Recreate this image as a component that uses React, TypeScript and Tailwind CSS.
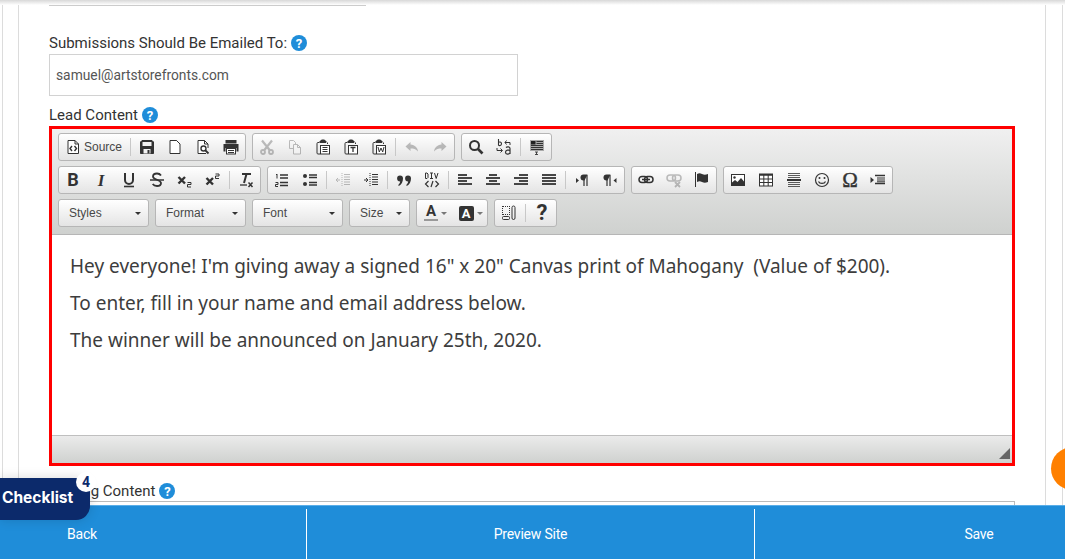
import type { ReactNode } from "react";

const S = ({ children, dim }: { children: ReactNode; dim?: boolean }) => (
  <svg
    width="16"
    height="16"
    viewBox="0 0 16 16"
    fill="none"
    stroke="#333"
    strokeWidth="1"
    className={dim ? "opacity-30" : ""}
  >
    {children}
  </svg>
);

const lines = (items: [number, number, number][], w = 1.5) =>
  items.map(([x1, x2, y], i) => <path key={i} d={`M${x1} ${y}H${x2}`} strokeWidth={w} />);

const clip = (inner: ReactNode) => (
  <S>
    <path d="M4.5 3.5H3a1 1 0 0 0-1 1V14a1 1 0 0 0 1 1h2" />
    <path d="M5 3.5V2h1.5V1h3v1H11v1.5Z" fill="#333" />
    <path d="M12.5 3.5V5" />
    <rect x="5.5" y="6.5" width="9" height="8.5" fill="#fff" />
    {inner}
  </S>
);

const icons: Record<string, ReactNode> = {
  source: (
    <S>
      <path d="M3 1.5h7l3.5 3.5v9.500H3Z" fill="#fff" />
      <path d="M10 1.5V5h3.5" />
      <path d="M7 7 5 9.5 7 12M9.5 7l2 2.5-2 2.5" strokeWidth="1.4" />
    </S>
  ),
  save: (
    <S>
      <path d="M3 1.500h10l1.500 1.500v11.500H1.500V3Z" fill="#333" />
      <rect x="3.500" y="3" width="9" height="4" fill="#f2f2f2" stroke="none" />
      <rect x="4.500" y="10" width="7" height="4.500" fill="#f2f2f2" stroke="none" />
      <rect x="8.500" y="11" width="2" height="3.500" fill="#333" stroke="none" />
    </S>
  ),
  newpage: (
    <S>
      <path d="M3 1.5h6.500l3.500 3.500v9.500H3Z" fill="#fff" />
      <path d="M9.500 1.500 13 5" />
    </S>
  ),
  preview: (
    <S>
      <path d="M11 14.500H3v-13h6.500L13 5v4" fill="#fff" />
      <path d="M9.500 1.500V5H13" />
      <circle cx="8.500" cy="9.500" r="2.500" strokeWidth="1.400" />
      <path d="m10.500 11.500 3 3" strokeWidth="1.800" />
    </S>
  ),
  print: (
    <S>
      <rect x="3" y="1.500" width="10" height="2.500" fill="#333" />
      <path d="M.5 5h15v7.500h-2V9h-11v3.500h-2Z" fill="#333" stroke="none" />
      <rect x="3.500" y="9.500" width="9" height="5.500" fill="#fff" />
      {lines([[5, 11, 11.500], [5, 11, 13.500]], 1)}
    </S>
  ),
  cut: (
    <S dim>
      <circle cx="4" cy="13" r="2" strokeWidth="1.800" />
      <circle cx="12" cy="13" r="2" strokeWidth="1.800" />
      <path d="M3 1.500 11 11.500M13 1.500 5 11.500" strokeWidth="2.200" />
    </S>
  ),
  copy: (
    <S dim>
      <path d="M6 9.500H2.500v-8h4l2 2v1.500" />
      <path d="M6.500 5.500h4l3 3v6.500h-7Z" fill="#fff" />
      <path d="M10.500 5.500v3h3" />
    </S>
  ),
  paste: clip(lines([[7.500, 12.500, 8.500], [7.500, 12.500, 10.500], [7.500, 12.500, 12.500]], 1)),
  pasteText: clip(<path d="M7.500 8.500h5M10 8.500v4.500" strokeWidth="1.300" />),
  pasteWord: clip(<path d="m7 8 1.300 5L10 9l1.700 4L13 8" strokeWidth="1" />),
  undo: (
    <S dim>
      <path d="M6.500 3 1.500 7.500l5 4.500V9.500c3 0 5.500.5 7.500 3-.5-4-3-6.500-7.500-7Z" fill="#333" stroke="none" />
    </S>
  ),
  redo: (
    <S dim>
      <path d="m9.500 3 5 4.500-5 4.500V9.500c-3 0-5.500.5-7.500 3 .5-4 3-6.500 7.500-7Z" fill="#333" stroke="none" />
    </S>
  ),
  find: (
    <S>
      <circle cx="6.500" cy="6.500" r="4.500" strokeWidth="2" />
      <path d="m10 10 4.500 4.500" strokeWidth="2.600" />
    </S>
  ),
  replace: (
    <S>
      <path d="M2.500 0v6.500M2.500 3.500c.6-.8 3-.8 3 1.300s-2.400 2.100-3 1.200" strokeWidth="1.100" />
      <path d="M9 3.500h5v2.500M10.500 1.500 9 3.500l1.500 2" strokeWidth="1" />
      <path d="M1 9v2.500h5M4.500 9.500l2 2-2 2" strokeWidth="1" />
      <path d="M10 8.500c1-1 4-1 4 1v5.500M14 11.500c-1-.7-4.500-.7-4.500 1.700s3.500 2.300 4.500 .8" strokeWidth="1.200" />
    </S>
  ),
  selectAll: (
    <S>
      <rect x="1" y="1" width="14" height="11" fill="#aaa" stroke="none" />
      <rect x="2" y="2" width="4.500" height="3.500" fill="#222" stroke="none" />
      {lines([[7.500, 14, 2.500], [7.500, 14, 4.500], [2, 14, 6.500], [2, 14, 8.500], [2, 14, 10.500]], 1)}
      <path d="M6 13h3M7.500 13v2.500M6 15.500h3" strokeWidth=".9" />
    </S>
  ),
  bold: <Letter className="font-bold text-[18px]">B</Letter>,
  italic: <Letter className="font-bold italic text-[17px] [font-family:'Liberation_Serif',serif]">I</Letter>,
  underline: (
    <S>
      <path d="M4 1v7a4 4 0 0 0 8 0V1" strokeWidth="2" />
      <path d="M3 14.500h10" strokeWidth="1.600" />
    </S>
  ),
  strike: (
    <S>
      <path d="M12 3.500C11 2 9.500 1.500 8 1.500c-2.500 0-4 1-4 3 0 3.500 8 3 8 6.500 0 2-1.500 3-4 3-1.800 0-3.300-.6-4.300-2" strokeWidth="1.800" />
      <path d="M1 8h14" strokeWidth="1.500" />
    </S>
  ),
  sub: (
    <S>
      <path d="m1.500 5 6.500 6.500M8 5l-6.500 6.500" strokeWidth="2.400" />
      <path d="M10.500 10.500H14V12.500H10.500V15H14" strokeWidth="1" />
    </S>
  ),
  sup: (
    <S>
      <path d="m1.500 6 6.500 6.500M8 6l-6.500 6.500" strokeWidth="2.400" />
      <path d="M10.500 2H14V4H10.500V6.500H14" strokeWidth="1" />
    </S>
  ),
  clear: (
    <S>
      <path d="M4 2h9M8.500 2 6 11" strokeWidth="2" />
      <path d="M2 13h7" strokeWidth="1.300" />
      <path d="m10.500 10.500 4 4.500m0-4.500-4 4.500" strokeWidth="1.500" />
    </S>
  ),
  ol: (
    <S>
      <path d="M3 2v4.500M2 3l1-1" strokeWidth="1" />
      <path d="M1.500 10.500h2.500v2H1.500V14.500H4" strokeWidth="1" />
      {lines([[6, 14, 3], [6, 14, 6], [6, 14, 10.500], [6, 14, 13.500]])}
    </S>
  ),
  ul: (
    <S>
      <circle cx="3" cy="4" r="2" fill="#333" stroke="none" />
      <circle cx="3" cy="12" r="2" fill="#333" stroke="none" />
      {lines([[7, 15, 3], [7, 15, 5.500], [7, 15, 10.500], [7, 15, 13]])}
    </S>
  ),
  outdent: (
    <S dim>
      <path d="M1 8h4M3 6 1 8l2 2" />
      <path d="M7 1v14" strokeDasharray="1 1" />
      {lines([[9, 15, 2.500], [9, 15, 5], [9, 15, 7.500], [9, 15, 10], [9, 15, 12.500]], 1)}
    </S>
  ),
  indent: (
    <S>
      <path d="M1 8h4M3 6l2 2-2 2" />
      <path d="M7 1v14" strokeDasharray="1 1" />
      {lines([[9, 15, 2.500], [9, 15, 5], [9, 15, 7.500], [9, 15, 10], [9, 15, 12.500]], 1)}
    </S>
  ),
  quote: (
    <S>
      <path d="M4 3.500a3 3 0 0 1 3 3c0 3.200-1.500 6-4.200 7.500l-.6-1C3.400 12 4 10.800 4.200 9.500A3 3 0 0 1 4 3.500Z" fill="#333" stroke="none" />
      <path d="M12 3.500a3 3 0 0 1 3 3c0 3.200-1.500 6-4.200 7.500l-.6-1c1.200-1 1.800-2.200 2-3.500A3 3 0 0 1 12 3.500Z" fill="#333" stroke="none" />
    </S>
  ),
  div: (
    <S>
      <path d="M1.500 1v5.500h1.500l1-1V2L3 1ZM6 1h3M7.500 1v5.500M6 6.500h3M10.500 1l1.700 5.500L14 1" strokeWidth="1" />
      <path d="M4.500 9 1.500 12l3 3M11.500 9l3 3-3 3M9 9l-2 6" strokeWidth="1.200" />
    </S>
  ),
  left: <S>{lines([[1, 10, 3], [1, 15, 6], [1, 10, 9], [1, 15, 12]], 1.800)}</S>,
  center: <S>{lines([[4, 12, 3], [1, 15, 6], [4, 12, 9], [1, 15, 12]], 1.800)}</S>,
  right: <S>{lines([[6, 15, 3], [1, 15, 6], [6, 15, 9], [1, 15, 12]], 1.800)}</S>,
  justify: <S>{lines([[1, 15, 3], [1, 15, 6], [1, 15, 9], [1, 15, 12]], 1.800)}</S>,
  ltr: (
    <S>
      <path d="m2 6 3 2.500L2 11Z" fill="#333" stroke="none" />
      <path d="M10 3v11M13 3v11" strokeWidth="1.200" />
      <path d="M13.500 2.500H9.500a3 3 0 0 0 0 6h1Z" fill="#333" stroke="none" />
    </S>
  ),
  rtl: (
    <S>
      <path d="m14.500 6-3 2.500 3 2.500Z" fill="#333" stroke="none" />
      <path d="M5 3v11M8 3v11" strokeWidth="1.200" />
      <path d="M8.500 2.500H4.500a3 3 0 0 0 0 6h1Z" fill="#333" stroke="none" />
    </S>
  ),
  link: (
    <S>
      <rect x="1" y="4.500" width="8.500" height="6" rx="3" strokeWidth="1.500" />
      <rect x="6.500" y="4.500" width="8.500" height="6" rx="3" strokeWidth="1.500" />
      <path d="M4 7.500h8" strokeWidth="1.500" />
    </S>
  ),
  unlink: (
    <S dim>
      <rect x="1" y="3" width="8.500" height="6" rx="3" strokeWidth="1.500" />
      <rect x="6.500" y="3" width="8.500" height="6" rx="3" strokeWidth="1.500" />
      <path d="m9 10 5 5m0-5-5 5" strokeWidth="1.800" />
    </S>
  ),
  flag: (
    <S>
      <path d="M1.500 0v15" strokeWidth="1" />
      <path d="M3 2c2-1 3-1 5 0s3.500 1 6 0v8c-2.500 1-4 1-6 0s-3-1-5 0Z" fill="#333" stroke="none" />
    </S>
  ),
  image: (
    <S>
      <rect x="1.500" y="2.500" width="13" height="11" fill="#fff" />
      <circle cx="4.500" cy="5.500" r="1.200" fill="#333" stroke="none" />
      <path d="M2 13v-2.500L5 8l2.500 2L11 6l3 3.500V13Z" fill="#333" stroke="none" />
    </S>
  ),
  table: (
    <S>
      <rect x="1.500" y="3" width="13" height="11" fill="#fff" />
      <path d="M1 2.500h14" strokeWidth="2" />
      <path d="M1.500 7h13M1.500 10.500h13M5.800 3v11M10.200 3v11" />
    </S>
  ),
  hr: (
    <S>
      {lines([[2, 14, 1.500], [2, 14, 3.500], [2, 14, 5.500], [2, 14, 10.500], [2, 14, 12.500], [2, 14, 14.500]], 0.8)}
      <path d="M1 8h14" strokeWidth="2" />
    </S>
  ),
  smiley: (
    <S>
      <circle cx="8" cy="8" r="6.500" strokeWidth="1.200" />
      <circle cx="5.500" cy="6" r="1" fill="#333" stroke="none" />
      <circle cx="10.500" cy="6" r="1" fill="#333" stroke="none" />
      <path d="M4.500 9.500c1 2.500 6 2.500 7 0" strokeWidth="1.200" />
    </S>
  ),
  omega: <Letter className="text-[21px] [font-family:'Liberation_Serif',serif] [-webkit-text-stroke:0.4px_#333]">Ω</Letter>,
  iframe: (
    <S>
      <path d="m.5 5 3.500 3-3.500 3Z" fill="#333" stroke="none" />
      <path d="M5 3.500h10M5 11.500h10" strokeWidth="1.500" />
      <path d="M7 6h8M7 8h8M7 9.800h8" strokeWidth="1" />
    </S>
  ),
  maximize: (
    <S>
      <path d="M1.500 1v10M2 1.500h6M2 9.500h6M8.500 1v9" strokeDasharray="1 1" />
      <rect x="1.500" y="11.500" width="7" height="3" rx="1" />
      <rect x="11" y="1" width="3" height="13.500" rx="1.500" />
    </S>
  ),
  help: <Letter className="font-bold text-[22px]">?</Letter>,
};

function Letter({ children, className }: { children: ReactNode; className?: string }) {
  return (
    <span className={`flex h-4 w-4 items-center justify-center leading-none text-[#333] ${className ?? ""}`}>
      {children}
    </span>
  );
}

const Btn = ({ name }: { name: string }) => (
  <span className="flex h-full w-7 items-center justify-center">{icons[name]}</span>
);

const Sep = () => (
  <span className="flex h-full w-[5px] items-center justify-center">
    <span className="h-[18px] w-px bg-[#c8c8c8]" />
  </span>
);

const Group = ({ children }: { children: ReactNode }) => (
  <div className="flex h-[28px] items-center rounded-[3px] border border-[#b6b6b6] bg-gradient-to-b from-[#ffffff] to-[#e4e4e4]">
    {children}
  </div>
);

const Combo = ({ label, width }: { label: string; width: string }) => (
  <div
    className={`flex h-[28px] items-center justify-between rounded-[3px] border border-[#b6b6b6] bg-gradient-to-b from-[#ffffff] to-[#e4e4e4] pl-[10px] pr-[7px] font-['Liberation_Sans',sans-serif] text-[12px] text-[#484848] ${width}`}
  >
    <span>{label}</span>
    <span className="h-0 w-0 border-x-[3px] border-t-[3px] border-x-transparent border-t-[#333]" />
  </div>
);

const Icons = ({ names }: { names: string[] }) => (
  <>
    {names.map((n, i) => (n === "|" ? <Sep key={i} /> : <Btn key={i} name={n} />))}
  </>
);

const Help = () => (
  <span className="ml-[4px] inline-flex h-4 w-4 items-center justify-center rounded-full bg-[#1f8dd9] text-[13px] font-bold leading-none text-white">
    ?
  </span>
);

const Label = ({ children }: { children: ReactNode }) => (
  <div className="flex items-center text-[15px] leading-[20px] text-[#333]">
    {children}
    <Help />
  </div>
);

const TextColor = ({ box }: { box?: boolean }) => (
  <span className="flex h-full w-[35px] items-center justify-center gap-[3px] pl-[2px]">
    {box ? (
      <span className="flex h-[15px] w-[15px] items-center justify-center rounded-[2px] bg-[#333] text-[13px] font-bold leading-none text-white">
        A
      </span>
    ) : (
      <span className="flex flex-col items-center text-[15px] font-bold leading-[13px] text-[#333]">
        A<span className="mt-[1px] h-[2px] w-[14px] bg-[#999]" />
      </span>
    )}
    <span className="h-0 w-0 border-x-[3px] border-t-[3px] border-x-transparent border-t-[#777]" />
  </span>
);

export default function App() {
  return (
    <div className="relative flex h-screen flex-col overflow-hidden bg-white font-['Roboto',sans-serif]">
      <div className="absolute inset-x-0 top-0 z-10 h-[5px] bg-gradient-to-b from-[#d8d8d8] to-white" />
      <main className="mx-[2px] min-h-0 flex-1 overflow-hidden border-x border-[#dcdcdc] pl-[15px] pr-[16px]">
        <div className="h-full overflow-hidden border-x border-[#dcdcdc] pl-[30px] pr-[30px]">
          <div className="h-[6px] w-[317px] border-x border-b border-[#ccc]" />
          <div className="mt-[27px]">
            <Label>Submissions Should Be Emailed To:</Label>
          </div>
          <div className="mt-[1px] flex h-[42px] w-[469px] items-center border border-[#d2d2d2] px-[6px] text-[13.8px] text-[#555]">
            samuel@artstorefronts.com
          </div>
          <div className="mt-[9px]">
            <Label>Lead Content</Label>
          </div>
          <section className="mt-[1px] flex h-[340px] flex-col border-[3px] border-[#ff0000]">
            <div className="flex h-[106px] shrink-0 flex-col gap-[5px] border-b border-[#b6b6b6] bg-gradient-to-b from-[#f0f0f0] to-[#cfd1cf] pl-[6px] pt-[4px]">
              <div className="flex gap-[6px]">
                <Group>
                  <span className="flex h-full w-[69px] items-center gap-[3px] pl-[6px] font-['Liberation_Sans',sans-serif] text-[12px] text-[#484848]">
                    {icons.source}Source
                  </span>
                  <Sep />
                  <Icons names={["save", "newpage", "preview", "print"]} />
                </Group>
                <Group>
                  <Icons names={["cut", "copy", "paste", "pasteText", "pasteWord", "|", "undo", "redo"]} />
                </Group>
                <Group>
                  <Icons names={["find", "replace", "|", "selectAll"]} />
                </Group>
              </div>
              <div className="flex gap-[6px]">
                <Group>
                  <Icons names={["bold", "italic", "underline", "strike", "sub", "sup", "|", "clear"]} />
                </Group>
                <Group>
                  <Icons
                    names={["ol", "ul", "|", "outdent", "indent", "|", "quote", "div", "|", "left", "center", "right", "justify", "|", "ltr", "rtl"]}
                  />
                </Group>
                <Group>
                  <Icons names={["link", "unlink", "flag"]} />
                </Group>
                <Group>
                  <Icons names={["image", "table", "hr", "smiley", "omega", "iframe"]} />
                </Group>
              </div>
              <div className="flex gap-[6px]">
                <Combo label="Styles" width="w-[91px]" />
                <Combo label="Format" width="w-[91px]" />
                <Combo label="Font" width="w-[91px]" />
                <Combo label="Size" width="w-[61px]" />
                <Group>
                  <TextColor />
                  <TextColor box />
                </Group>
                <Group>
                  <Icons names={["maximize", "|", "help"]} />
                </Group>
              </div>
            </div>
            <div className="min-h-0 flex-1 bg-white pl-[18px] pt-[13px] font-['Noto_Sans',sans-serif] text-[19px] leading-[37px] text-[#3d3d3d]">
              <p className="whitespace-pre">{"Hey everyone! I'm giving away a signed 16\" x 20\" Canvas print of Mahogany  (Value of $200)."}</p>
              <p>To enter, fill in your name and email address below.</p>
              <p>The winner will be announced on January 25th, 2020.</p>
            </div>
            <div className="relative h-[28px] shrink-0 border-t border-[#bfbfbf] bg-gradient-to-b from-[#ebebeb] to-[#cfd1cf]">
              <span className="absolute bottom-[4px] right-[2px] h-0 w-0 border-b-[11px] border-l-[11px] border-b-[#666] border-l-transparent" />
            </div>
          </section>
          <div className="mt-[15px]">
            <Label>Closing Content</Label>
          </div>
          <div className="h-[10px] border-x border-t border-[#bbb]" />
        </div>
      </main>
      <footer className="grid h-[54px] shrink-0 grid-cols-[306px_448px_1fr] border-t border-[#5aaee8] bg-[#1f8dd9] pt-[3px] text-[14px] tracking-[-0.2px] text-white">
        <div className="flex items-center justify-center pr-[142px]">Back</div>
        <div className="flex items-center justify-center border-l border-white">Preview Site</div>
        <div className="flex items-center justify-center border-l border-white pl-[138px]">Save</div>
      </footer>
      <div className="absolute left-0 top-[478px] z-20 flex h-[42px] w-[90px] items-center rounded-r-[14px] bg-[#0c2a6b] pb-[2px] pl-[2px] font-['Inter',sans-serif] text-[15.5px] font-bold text-white shadow-[0_0_12px_rgba(0,0,0,0.15)]">
        Checklist
      </div>
      <span className="absolute left-[76px] top-[472px] z-30 flex h-5 w-5 items-center justify-center rounded-full bg-white text-[14px] font-bold text-[#0c2a6b]">
        4
      </span>
      <span className="absolute left-[1051px] top-[447px] z-20 h-[43px] w-[43px] rounded-full bg-[#ff8000]" />
    </div>
  );
}
